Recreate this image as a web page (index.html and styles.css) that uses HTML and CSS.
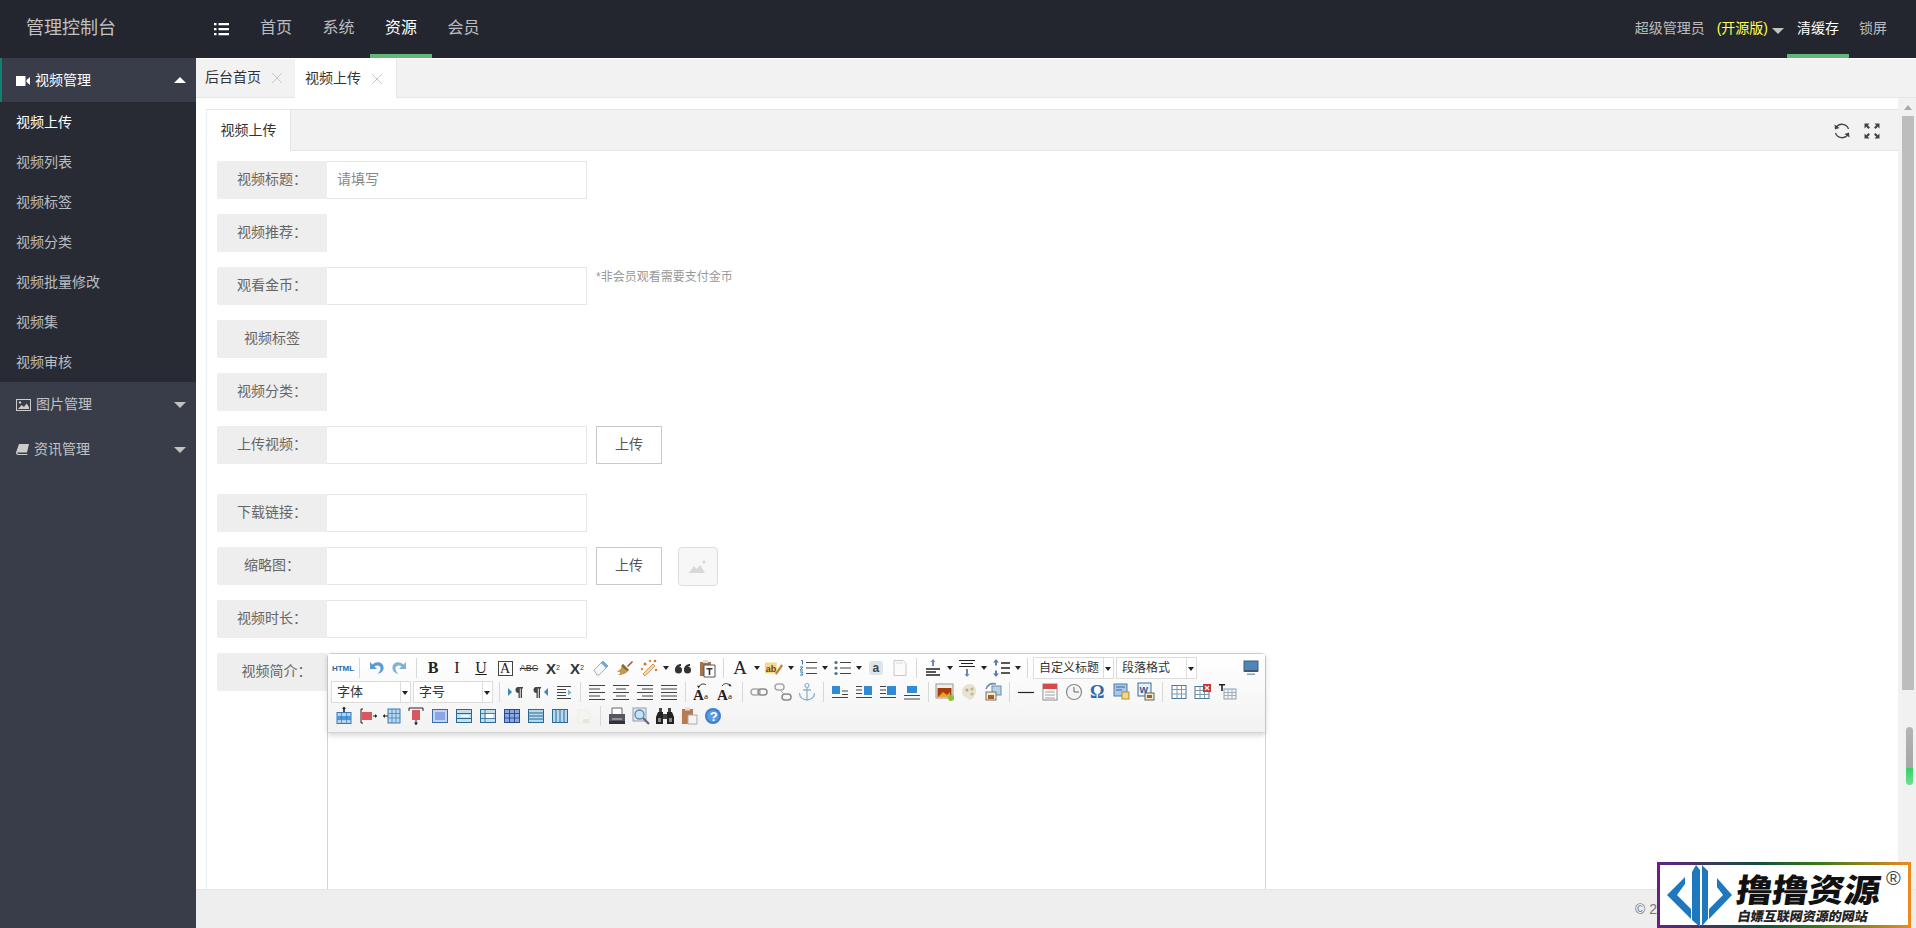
FILE: index.html
```html
<!DOCTYPE html>
<html lang="zh-CN">
<head>
<meta charset="utf-8">
<title>管理控制台</title>
<link rel="stylesheet" href="styles.css">
</head>
<body>
<svg class="defs" aria-hidden="true">
  <symbol id="close" viewBox="0 0 12 12"><path d="M1 1l10 10M11 1L1 11" stroke="#c8c8c8" fill="none"/></symbol>
  <symbol id="undo" viewBox="0 0 20 20"><path d="M4 4v7h7l-2.500-2.500C11 6.500 15 7.500 14.500 11c-.2 1.800-1.300 3.500-3 5 4-.8 6.500-3.500 6-7C17 4.500 11 2.500 6.500 6.500z" fill="#5a9bd0"/></symbol>
  <symbol id="redo" viewBox="0 0 20 20"><path d="M16 4v7H9l2.500-2.500C9 6.500 5 7.500 5.500 11c.2 1.800 1.300 3.500 3 5-4-.8-6.500-3.500-6-7C3 4.500 9 2.500 13.500 6.500z" fill="#7fb3d4"/></symbol>
  <symbol id="eraser" viewBox="0 0 20 20"><path d="M3 12l9-9 5 5-9 9H6z" fill="#f4f6f8" stroke="#9ab0c0"/><path d="M10 5l2-2 5 5-2 2z" fill="#6fa8d8"/></symbol>
  <symbol id="brush" viewBox="0 0 20 20"><path d="M12 8l5-5 1 1-5 5z" fill="#8a5a2a"/><path d="M8 6l6 6c-2 3-6 5-11 5 2-1 2-2 2-3-1 0-2 0-3-1 3 0 4-3 6-7z" fill="#c49a4a"/><path d="M8 6l6 6-2 1-6-5z" fill="#8a6a30"/></symbol>
  <symbol id="wand" viewBox="0 0 20 20"><path d="M4 16L14 6l2 2L6 18z" fill="#f0d8b0" stroke="#c8843c" stroke-width=".8"/><circle cx="6" cy="6" r="1.500" fill="#d8702c"/><circle cx="11" cy="3" r="1.300" fill="#e09040"/><circle cx="16" cy="3" r="1.300" fill="#d8702c"/><circle cx="3" cy="11" r="1.300" fill="#e09040"/><circle cx="17" cy="12" r="1.200" fill="#d8702c"/></symbol>
  <symbol id="quote" viewBox="0 0 20 20"><circle cx="5.500" cy="12" r="3.500" fill="#333"/><path d="M2 12c0-4 3-6 6-6v2c-2 0-3 2-3 4z" fill="#333"/><circle cx="14.500" cy="12" r="3.500" fill="#333"/><path d="M11 12c0-4 3-6 6-6v2c-2 0-3 2-3 4z" fill="#333"/></symbol>
  <symbol id="ptext" viewBox="0 0 20 20"><path d="M3 4h11v14H3z" fill="#a8734a"/><path d="M6 2h5v3H6z" fill="#ddd"/><path d="M7 7h11v12H7z" fill="#fff" stroke="#555"/><path d="M9.500 10h6v1.500h-2.200V17h-1.600v-5.500H9.500z" fill="#333"/></symbol>
  <symbol id="ol" viewBox="0 0 20 20"><path d="M8 4.500h11M8 10h11M8 15.500h11" stroke="#444" stroke-width="1.200"/><path d="M3 2.500h1.500v4M2 9h3l-3 3h3M2 14h3l-1 1.500 1 1.500H2" stroke="#3a78b8" fill="none"/></symbol>
  <symbol id="ul" viewBox="0 0 20 20"><path d="M8 4.500h11M8 10h11M8 15.500h11" stroke="#444" stroke-width="1.200"/><circle cx="4" cy="4.500" r="1.600" fill="#46708e"/><circle cx="4" cy="10" r="1.600" fill="#46708e"/><circle cx="4" cy="15.500" r="1.600" fill="#46708e"/></symbol>
  <symbol id="doc" viewBox="0 0 20 20"><path d="M4 2.500h9l3 3v12H4z" fill="#fbfbfb" stroke="#c4c8cc"/><path d="M6 5h7" stroke="#d4d8dc"/></symbol>
  <symbol id="ptop" viewBox="0 0 20 20"><path d="M10 1l2.500 3H11v4H9V4H7.500z" fill="#6a8ab0"/><path d="M3 11h14M3 14h10M3 17h14" stroke="#222" stroke-width="1.300"/></symbol>
  <symbol id="pbot" viewBox="0 0 20 20"><path d="M2 2.500h16M4 5.500h12M2 8.500h16" stroke="#222" stroke-width="1.200"/><path d="M10 19l2.500-3H11v-5H9v5H7.500z" fill="#6a8ab0"/></symbol>
  <symbol id="lh" viewBox="0 0 20 20"><path d="M5 1l3 3.500H6v3H4v-3H2zM5 19l3-3.500H6v-3H4v3H2z" fill="#5a7fb0"/><path d="M10 5h9M10 10h9M10 15h9" stroke="#222" stroke-width="1.300"/></symbol>
  <symbol id="screen" viewBox="0 0 20 20"><rect x="3" y="3" width="14" height="10" fill="#4f86b8" stroke="#3a5f80"/><path d="M3 12h14v2H3z" fill="#44586c"/><path d="M6 15.500h8V17H6z" fill="#8aa0b4"/></symbol>
  <symbol id="ltr" viewBox="0 0 20 20"><path d="M2 6l4 4-4 4z" fill="#3a88b8"/><path d="M12 5h5v1.500h-1V16h-1.300V6.500h-.9V16h-1.300v-5c-1.700 0-3-1.300-3-3s1-3 2.500-3z" fill="#444"/></symbol>
  <symbol id="rtl" viewBox="0 0 20 20"><path d="M18 6l-4 4 4 4z" fill="#3a88b8"/><path d="M6 5h5v1.500h-1V16H8.700V6.500h-.9V16H6.500v-5c-1.700 0-3-1.300-3-3s1-3 2.500-3z" fill="#444"/></symbol>
  <symbol id="indent" viewBox="0 0 20 20"><path d="M3 4.500h14M3 7.500h9M3 10.500h9M3 13.500h9M3 16.500h14" stroke="#444" stroke-width="1.100"/><path d="M14 7.500l3.500 3-3.500 3z" fill="#7fb3d4"/></symbol>
  <symbol id="al" viewBox="0 0 20 20"><path d="M2 3.500h16M2 7h11M2 10.500h16M2 14h11M2 17.500h16" stroke="#444"/></symbol>
  <symbol id="ac" viewBox="0 0 20 20"><path d="M2 3.500h16M5 7h10M2 10.500h16M5 14h10M2 17.500h16" stroke="#444"/></symbol>
  <symbol id="ar" viewBox="0 0 20 20"><path d="M2 3.500h16M7 7h11M2 10.500h16M7 14h11M2 17.500h16" stroke="#444"/></symbol>
  <symbol id="aj" viewBox="0 0 20 20"><path d="M2 3.500h16M2 7h16M2 10.500h16M2 14h16M2 17.500h16" stroke="#444"/></symbol>
  <symbol id="link" viewBox="0 0 20 20"><rect x="2" y="7" width="9" height="6" rx="3" fill="none" stroke="#a8a8a8" stroke-width="1.500"/><rect x="9" y="7" width="9" height="6" rx="3" fill="none" stroke="#8a8a8a" stroke-width="1.500"/></symbol>
  <symbol id="unlink" viewBox="0 0 20 20"><rect x="2" y="2" width="9" height="6" rx="3" fill="none" stroke="#a8a8a8" stroke-width="1.500"/><rect x="9" y="12" width="9" height="6" rx="3" fill="none" stroke="#8a8a8a" stroke-width="1.500"/><path d="M8 9l3 3" stroke="#a8a8a8"/></symbol>
  <symbol id="anchor" viewBox="0 0 20 20"><circle cx="10" cy="3.500" r="2" fill="none" stroke="#8ab0d4" stroke-width="1.200"/><path d="M10 5.500V18M6 8h8M2.500 11c0 4 3 6.500 7.500 7 4.500-.5 7.500-3 7.500-7" stroke="#8ab0d4" fill="none" stroke-width="1.300"/></symbol>
  <symbol id="il" viewBox="0 0 20 20"><rect x="2" y="4" width="8" height="8" fill="#2f8ad8"/><path d="M2 15.500h16M12 9h6M12 12.500h6" stroke="#444" stroke-width="1.100"/></symbol>
  <symbol id="ir" viewBox="0 0 20 20"><rect x="10" y="4" width="8" height="9" fill="#2f8ad8"/><path d="M2 4.500h6M2 8h6M2 11.500h6M2 15.500h16" stroke="#444" stroke-width="1.100"/></symbol>
  <symbol id="in" viewBox="0 0 20 20"><path d="M2 4.500h6M2 8h6M2 11.500h6M2 15.500h16" stroke="#444" stroke-width="1.100"/><rect x="9" y="4" width="9" height="9" fill="#2f8ad8"/></symbol>
  <symbol id="ic" viewBox="0 0 20 20"><rect x="5" y="4" width="10" height="7" fill="#2f8ad8"/><path d="M2 13.500h16M2 17h16" stroke="#444" stroke-width="1.100"/></symbol>
  <symbol id="image" viewBox="0 0 20 20"><rect x="1" y="2" width="17" height="14" fill="#eee" stroke="#998"/><rect x="2.500" y="6" width="14" height="9" fill="#a83c10"/><path d="M3 15l5-5 4 3 3-3v5z" fill="#e8a030"/><circle cx="16" cy="16" r="3" fill="#8ac034"/></symbol>
  <symbol id="emo" viewBox="0 0 20 20"><path d="M3 10c0-5 4-8 8-8s6 3 6 7-3 9-7 9c-1-3-7-2-7-8z" fill="#e8e2d2"/><circle cx="8" cy="8" r="1.500" fill="#b8a888"/><circle cx="13" cy="7" r="1.500" fill="#c8b078"/><circle cx="13" cy="12" r="1.500" fill="#a8c0a0"/></symbol>
  <symbol id="music" viewBox="0 0 20 20"><rect x="9" y="4" width="9" height="9" fill="#b8d0e8" stroke="#6a8ab0"/><rect x="3" y="10" width="10" height="8" fill="#f0e8d0" stroke="#776"/><rect x="5" y="13" width="6" height="4" fill="#a85c20"/><path d="M3 7C5 2 9 1 13 2" stroke="#6a8ab0" fill="none" stroke-width="1.500"/></symbol>
  <symbol id="hr" viewBox="0 0 20 20"><path d="M2 10.500h16" stroke="#222" stroke-width="1.200"/></symbol>
  <symbol id="date" viewBox="0 0 20 20"><rect x="3" y="2" width="14" height="16" fill="#fff" stroke="#8a8a8a"/><rect x="3" y="2" width="14" height="5" fill="#d84848"/><path d="M5 10h10M5 13h10M5 16h10" stroke="#999"/></symbol>
  <symbol id="time" viewBox="0 0 20 20"><circle cx="10" cy="10" r="7.500" fill="#f4f4f4" stroke="#888" stroke-width="1.200"/><path d="M10 5v5h5" stroke="#666" fill="none"/></symbol>
  <symbol id="tpl" viewBox="0 0 20 20"><rect x="2" y="2" width="13" height="12" fill="#a8c8e8" stroke="#4a7ab0"/><path d="M4 5h9M4 8h6" stroke="#3a6a9a"/><rect x="10" y="10" width="7" height="7" fill="#f0d890" stroke="#b08a30"/></symbol>
  <symbol id="tbl" viewBox="0 0 20 20"><rect x="3" y="3.500" width="14" height="13" fill="#fff" stroke="#4a7898"/><path d="M3 7.500h14M3 12h14M8 3.500v13M12.500 3.500v13" stroke="#7a9ab0"/></symbol>
  <symbol id="tdel" viewBox="0 0 20 20"><rect x="2" y="4.500" width="14" height="12" fill="#fff" stroke="#4a7898"/><path d="M2 8.500h14M2 12.500h14M7 4.500v12M11.500 4.500v12" stroke="#7a9ab0"/><rect x="10" y="2" width="8" height="8" fill="#c83838"/><path d="M12 4l4 4M16 4l-4 4" stroke="#fff" stroke-width="1.200"/></symbol>
  <symbol id="ttitle" viewBox="0 0 20 20"><path d="M2 2h6v1.500H5.800V9H4.200V3.500H2z" fill="#222"/><rect x="7" y="7" width="12" height="10" fill="#f4f4f4" stroke="#8aa0b0"/><path d="M7 10.500h12M7 13.500h12M11 7v10M15 7v10" stroke="#a0b0c0"/></symbol>
  <symbol id="t1" viewBox="0 0 20 20"><path d="M10 .5l2 2.500h-1.200v3H9.200V3H8z" fill="#222"/><rect x="3" y="6.500" width="14" height="11" fill="#b0d4ee" stroke="#3a7ab0"/><rect x="3" y="10" width="14" height="3" fill="#4a98d8"/><path d="M3 13.500h14M7.500 6.500v11M12.500 6.500v11" stroke="#3a7ab0" stroke-width=".7"/></symbol>
  <symbol id="t2" viewBox="0 0 20 20"><path d="M5 3H3v14h2" stroke="#222" fill="none"/><rect x="4" y="6" width="10" height="8" fill="#d85860"/><path d="M15 10h4" stroke="#222"/><path d="M17 8l2 2-2 2z" fill="#222"/></symbol>
  <symbol id="t3" viewBox="0 0 20 20"><rect x="6" y="3" width="12" height="14" fill="#b8d8f0" stroke="#3a7ab0"/><path d="M10 3v14M14 3v14M6 7.500h12M6 12h12" stroke="#3a7ab0" stroke-width=".7"/><path d="M1 10h5" stroke="#222"/><path d="M3 8l-2 2 2 2z" fill="#222"/></symbol>
  <symbol id="t4" viewBox="0 0 20 20"><path d="M3 5V2h14v3" stroke="#222" fill="none"/><rect x="6" y="4" width="8" height="10" fill="#d85860"/><path d="M10 14v5" stroke="#222"/><path d="M8 16.500l2 2.500 2-2.500z" fill="#222"/></symbol>
  <symbol id="t5" viewBox="0 0 20 20"><rect x="2.500" y="3.500" width="15" height="13" fill="#c4d4f0" stroke="#3a6ab0"/><rect x="5" y="6" width="10" height="8" fill="#8aa6e4"/></symbol>
  <symbol id="t6" viewBox="0 0 20 20"><rect x="2.500" y="3.500" width="15" height="13" fill="#c4e0f0" stroke="#2a6a90"/><path d="M2.500 7.500h15M2.500 12.500h15" stroke="#2a6a90"/><path d="M7 10h8" stroke="#fff" stroke-width="1.500"/></symbol>
  <symbol id="t7" viewBox="0 0 20 20"><rect x="2.500" y="3.500" width="15" height="13" fill="#c4e0f0" stroke="#2a6a90"/><path d="M2.500 7.500h15M2.500 12.500h15M7 3.500v13" stroke="#2a6a90" stroke-width=".8"/><rect x="8" y="8" width="7" height="4" fill="#fff"/></symbol>
  <symbol id="t8" viewBox="0 0 20 20"><rect x="2.500" y="3.500" width="15" height="13" fill="#8aa8e0" stroke="#2a4a90"/><path d="M2.500 7.500h15M2.500 12h15M7.500 3.500v13M12.500 3.500v13" stroke="#1a3a80" stroke-width=".8"/></symbol>
  <symbol id="t9" viewBox="0 0 20 20"><rect x="2.500" y="3.500" width="15" height="13" fill="#b8d8f0" stroke="#2a6a90"/><path d="M2.500 7h15M2.500 10h15M2.500 13h15" stroke="#2a6a90"/></symbol>
  <symbol id="t10" viewBox="0 0 20 20"><rect x="2.500" y="3.500" width="15" height="13" fill="#b8d8f0" stroke="#2a6a90"/><path d="M6 3.500v13M10 3.500v13M14 3.500v13" stroke="#2a6a90"/></symbol>
  <symbol id="t11" viewBox="0 0 20 20"><path d="M4 4h8l4 4v9H4z" fill="#f4f4f0" stroke="#ececec"/><path d="M9 13h6v4H9z" fill="#e6e6dc"/></symbol>
  <symbol id="print" viewBox="0 0 20 20"><path d="M5 2h10v7H5z" fill="#fff" stroke="#666"/><rect x="2" y="8" width="16" height="7" fill="#556"/><rect x="2" y="15" width="16" height="3" fill="#333"/><path d="M5 13h10" stroke="#ccc"/></symbol>
  <symbol id="prev" viewBox="0 0 20 20"><rect x="2" y="2" width="13" height="13" fill="#dfe8f0" stroke="#8aa0b0"/><circle cx="8.500" cy="8.500" r="4.500" fill="#c8e0f4" stroke="#5a88a8" stroke-width="1.300"/><path d="M12 12l6 6" stroke="#667" stroke-width="2.300"/></symbol>
  <symbol id="find" viewBox="0 0 20 20"><path d="M3 6h5v12H1V11zM12 6h5l2 5v7h-7z" fill="#222"/><path d="M4 2h3v4H4zM13 2h3v4h-3zM8 8h4v5H8z" fill="#444"/><path d="M3 12h3v4H3zM14 12h3v4h-3z" fill="#888"/></symbol>
  <symbol id="paste" viewBox="0 0 20 20"><path d="M3 3h11v15H3z" fill="#b87c50"/><path d="M6 1.500h5v3H6z" fill="#ddd"/><path d="M9 9h9v9H9z" fill="#f4f4f4" stroke="#aaa"/></symbol>
</svg>

<div class="app">
  <header class="top">
    <div class="brand">管理控制台</div>
    <svg class="burger" viewBox="0 0 15 14"><path d="M0 1h2.500v2.200H0zM0 6h2.500v2.200H0zM0 11h2.500v2.200H0zM4.500 1H15v2.200H4.500zM4.500 6H15v2.200H4.500zM4.500 11H15v2.200H4.500z" fill="#fff"/></svg>
    <nav class="nav">
      <a class="nav-item">首页</a>
      <a class="nav-item">系统</a>
      <a class="nav-item on">资源</a>
      <a class="nav-item">会员</a>
    </nav>
    <div class="top-right">
      <span>超级管理员</span>
      <span class="edition">(开源版)</span>
      <i class="caret down small"></i>
      <a class="tool on">清缓存</a>
      <a class="tool">锁屏</a>
    </div>
  </header>

  <div class="below">
    <aside class="side">
      <div class="group open">
        <svg class="gi" viewBox="0 0 14 10"><path d="M0 0h9.500v10H0z" fill="#fff"/><path d="M10.500 4L14 1v8l-3.500-3z" fill="#fff"/></svg>
        <span>视频管理</span><i class="caret up"></i>
      </div>
      <div class="sub">
        <a class="on">视频上传</a>
        <a>视频列表</a>
        <a>视频标签</a>
        <a>视频分类</a>
        <a>视频批量修改</a>
        <a>视频集</a>
        <a>视频审核</a>
      </div>
      <div class="group">
        <svg class="gi wide" viewBox="0 0 15 12"><rect x=".5" y=".5" width="14" height="11" fill="none" stroke="#ccc"/><path d="M2 10l3.500-4 2.500 2 2.500-3.500L13 8v2z" fill="#ccc"/><circle cx="4" cy="3.500" r="1.200" fill="#ccc"/></svg>
        <span>图片管理</span><i class="caret down"></i>
      </div>
      <div class="group">
        <svg class="gi book" viewBox="0 0 13 11"><path d="M3 0h10l-2 8.500H1.500C1 9.500 2 10 3 10h8.500l-.3 1H2.500C.5 11-.4 9.800 .2 8z" fill="#ccc"/></svg>
        <span>资讯管理</span><i class="caret down"></i>
      </div>
    </aside>

    <main class="main">
      <div class="tabs">
        <div class="tab">后台首页<svg class="x"><use href="#close"/></svg></div>
        <div class="tab active">视频上传<svg class="x"><use href="#close"/></svg></div>
      </div>

      <div class="body">
        <div class="pane">
          <section class="card">
            <div class="card-head">
              <div class="card-tab">视频上传</div>
              <div class="card-tools">
                <svg class="ct" viewBox="0 0 18 18"><path d="M15.500 7A7 7 0 0 0 3 5.500M2.500 11A7 7 0 0 0 15 12.500" fill="none" stroke="#444" stroke-width="1.300"/><path d="M1.500 2.500l.5 5 4.500-1.500zM16.500 15.500l-.5-5-4.500 1.500z" fill="#444"/></svg>
                <svg class="ct" viewBox="0 0 18 18"><path d="M1.500 1.500h5L4.800 3.200 7 5.400 5.400 7 3.200 4.800 1.500 6.500zM16.500 1.500v5l-1.700-1.700L12.600 7 11 5.400l2.200-2.200-1.700-1.700zM1.500 16.500v-5l1.700 1.700L5.400 11 7 12.600l-2.200 2.200 1.700 1.700zM16.500 16.500h-5l1.700-1.700L11 12.600 12.600 11l2.200 2.200 1.700-1.700z" fill="#444"/></svg>
              </div>
            </div>
            <div class="form">
              <div class="row"><label class="lbl">视频标题：</label><input class="inp" placeholder="请填写"></div>
              <div class="row"><label class="lbl">视频推荐：</label></div>
              <div class="row"><label class="lbl">观看金币：</label><input class="inp"><span class="hint">*非会员观看需要支付金币</span></div>
              <div class="row"><label class="lbl">视频标签</label></div>
              <div class="row"><label class="lbl">视频分类：</label></div>
              <div class="row gap"><label class="lbl">上传视频：</label><input class="inp"><button class="btn">上传</button></div>
              <div class="row"><label class="lbl">下载链接：</label><input class="inp"></div>
              <div class="row"><label class="lbl">缩略图：</label><input class="inp"><button class="btn">上传</button>
                <div class="thumb"><svg viewBox="0 0 20 16"><path d="M1 14l5-7 3 3 3-4 5 8z" fill="#d8d8d8"/><circle cx="16" cy="3" r="1.500" fill="#d8d8d8"/></svg></div>
              </div>
              <div class="row"><label class="lbl">视频时长：</label><input class="inp"></div>
              <div class="row last"><label class="lbl shift">视频简介：</label>
                <div class="editor">
                  <div class="toolbar">
                    <div class="tr">
                      <b class="b html">HTML</b><s class="sep"></s>
                      <svg class="b"><use href="#undo"/></svg><svg class="b"><use href="#redo"/></svg><s class="sep"></s>
                      <b class="b serif big">B</b><em class="b serif big">I</em><span class="b serif big"><u>U</u></span><span class="b serif"><span class="boxed">A</span></span>
                      <span class="b abc">ABC</span><span class="b xs">X<sup>2</sup></span><span class="b xs">X<sub>2</sub></span>
                      <svg class="b"><use href="#eraser"/></svg><svg class="b"><use href="#brush"/></svg><svg class="b"><use href="#wand"/></svg><i class="dd"></i>
                      <svg class="b"><use href="#quote"/></svg><svg class="b"><use href="#ptext"/></svg><s class="sep"></s>
                      <span class="b serif huge">A</span><i class="dd"></i>
                      <svg class="b" viewBox="0 0 22 20"><rect x="1" y="4" width="13" height="12" fill="#f4d98a"/><path d="M12 16l7-10 2 1.500-7 10z" fill="#b8863a"/><text x="2" y="14" class="svgab">ab</text></svg><i class="dd"></i>
                      <svg class="b"><use href="#ol"/></svg><i class="dd"></i><svg class="b"><use href="#ul"/></svg><i class="dd"></i>
                      <svg class="b" viewBox="0 0 20 20"><rect x="3" y="3" width="14" height="14" rx="3" fill="#dde4ea"/><text x="6.500" y="14" class="svga">a</text></svg><svg class="b"><use href="#doc"/></svg><s class="sep"></s>
                      <svg class="b"><use href="#ptop"/></svg><i class="dd"></i><svg class="b"><use href="#pbot"/></svg><i class="dd"></i><svg class="b"><use href="#lh"/></svg><i class="dd"></i><s class="sep"></s>
                      <div class="sel s1"><span>自定义标题</span><i class="dd"></i></div>
                      <div class="sel s2"><span>段落格式</span><i class="dd"></i></div>
                      <svg class="b end"><use href="#screen"/></svg>
                    </div>
                    <div class="tr">
                      <div class="sel s3"><span>字体</span><i class="dd"></i></div>
                      <div class="sel s3"><span>字号</span><i class="dd"></i></div><s class="sep"></s>
                      <svg class="b"><use href="#ltr"/></svg><svg class="b"><use href="#rtl"/></svg><svg class="b"><use href="#indent"/></svg><s class="sep"></s>
                      <svg class="b"><use href="#al"/></svg><svg class="b"><use href="#ac"/></svg><svg class="b"><use href="#ar"/></svg><svg class="b"><use href="#aj"/></svg><s class="sep"></s>
                      <svg class="b" viewBox="0 0 20 20"><path d="M7 5C8 2 12 1 14 3" stroke="#333" fill="none"/><path d="M5 3.500l3 .5-1.500 2.500z" fill="#333"/><text x="1" y="18" class="svgA">A</text><text x="12" y="17" class="svgb">a</text></svg>
                      <svg class="b" viewBox="0 0 20 20"><path d="M6 4c2-3 5-3 8-1" stroke="#333" fill="none"/><path d="M15.500 4.500l-3-.5 1.500-2.500z" fill="#333"/><text x="1" y="18" class="svgA">A</text><text x="12" y="17" class="svgb">a</text></svg><s class="sep"></s>
                      <svg class="b"><use href="#link"/></svg><svg class="b"><use href="#unlink"/></svg><svg class="b"><use href="#anchor"/></svg><s class="sep"></s>
                      <svg class="b"><use href="#il"/></svg><svg class="b"><use href="#ir"/></svg><svg class="b"><use href="#in"/></svg><svg class="b"><use href="#ic"/></svg><s class="sep"></s>
                      <svg class="b"><use href="#image"/></svg><svg class="b"><use href="#emo"/></svg><svg class="b"><use href="#music"/></svg><s class="sep"></s>
                      <svg class="b"><use href="#hr"/></svg><svg class="b"><use href="#date"/></svg><svg class="b"><use href="#time"/></svg>
                      <svg class="b" viewBox="0 0 20 20"><text x="2" y="16" class="svgo">Ω</text></svg>
                      <svg class="b"><use href="#tpl"/></svg>
                      <svg class="b" viewBox="0 0 20 20"><rect x="2" y="1" width="13" height="13" fill="#e8f0f8" stroke="#3a6aa0"/><text x="3.500" y="11" class="svgw">W</text><rect x="9" y="11" width="9" height="7" fill="#f0e8d0" stroke="#665"/><rect x="11" y="13" width="5" height="3" fill="#a85c20"/></svg><s class="sep"></s>
                      <svg class="b"><use href="#tbl"/></svg><svg class="b"><use href="#tdel"/></svg><svg class="b"><use href="#ttitle"/></svg>
                    </div>
                    <div class="tr r3">
                      <svg class="b"><use href="#t1"/></svg><svg class="b"><use href="#t2"/></svg><svg class="b"><use href="#t3"/></svg><svg class="b"><use href="#t4"/></svg><svg class="b"><use href="#t5"/></svg><svg class="b"><use href="#t6"/></svg><svg class="b"><use href="#t7"/></svg><svg class="b"><use href="#t8"/></svg><svg class="b"><use href="#t9"/></svg><svg class="b"><use href="#t10"/></svg><svg class="b"><use href="#t11"/></svg><s class="sep"></s>
                      <svg class="b"><use href="#print"/></svg><svg class="b"><use href="#prev"/></svg><svg class="b"><use href="#find"/></svg><svg class="b"><use href="#paste"/></svg>
                      <svg class="b" viewBox="0 0 20 20"><circle cx="10" cy="10" r="8" fill="#3a7fd0"/><circle cx="10" cy="10" r="6" fill="#5a9ae0"/><text x="6.800" y="14.500" class="svgq">?</text></svg>
                    </div>
                  </div>
                  <div class="edit-area"></div>
                </div>
              </div>
            </div>
          </section>
        </div>
        <div class="scroll">
          <i class="arrow"></i>
          <div class="thumbbar"></div>
          <div class="pill"></div>
        </div>
      </div>

      <footer class="foot"><span>© 2</span></footer>
    </main>
  </div>

  <div class="mark">
    <svg class="mark-logo" viewBox="0 0 75 66"><path d="M7 33L25 15v7l-8 11 14 14v10zM32 10l4-7 4 5v57l-8-7zM42 3l6 6v48l-6 7zM57 16l15 17-23 24V47l14-14-6-8z" fill="#1f78bd"/></svg>
    <div class="mark-text">
      <div class="mark-title">撸撸资源</div>
      <div class="mark-sub">白嫖互联网资源的网站</div>
    </div>
    <span class="mark-r">®</span>
  </div>
</div>
</body>
</html>
```

FILE: styles.css
```css
* { box-sizing: border-box; }
html, body { margin: 0; height: 100%; overflow: hidden; }
body {
  font: 14px/1.4 "Liberation Sans", "Noto Sans CJK SC", sans-serif;
  color: #333;
  background: #fff;
}
a { color: inherit; text-decoration: none; }
.defs { position: absolute; width: 0; height: 0; }
.svgab { font: bold 10px "Liberation Sans", sans-serif; fill: #7a3a10; }
.svga { font: bold 12px "Liberation Sans", sans-serif; fill: #444; }
.svgA { font: bold 15px "Liberation Serif", serif; fill: #222; }
.svgb { font: 9px "Liberation Serif", serif; fill: #222; }
.svgo { font: bold 18px "Liberation Serif", serif; fill: #2a6ab0; }
.svgw { font: bold 9px "Liberation Sans", sans-serif; fill: #2a5a90; }
.svgq { font: bold 13px "Liberation Sans", sans-serif; fill: #fff; }

.app { height: 928px; display: flex; flex-direction: column; position: relative; }

/* header */
.top {
  height: 58px;
  flex: none;
  background: #23262e;
  display: flex;
  align-items: center;
  padding-left: 26px;
  color: rgba(255,255,255,.7);
}
.brand { width: 188px; font-size: 18px; color: rgba(255,255,255,.72); }
.burger { width: 15px; height: 14px; margin-right: 16px; }
.nav { display: flex; gap: .5px; height: 100%; }
.nav-item {
  padding: 0 15px;
  font-size: 16px;
  line-height: 56px;
  height: 58px;
  border-bottom: 4px solid transparent;
}
.nav-item.on { color: #fff; border-bottom-color: #5fb878; }
.top-right { margin-left: auto; display: flex; align-items: center; height: 100%; padding-right: 19px; font-size: 14px; }
.edition { color: #ff5; margin-left: 12px; }
.tool {
  padding: 0 10px;
  height: 58px;
  line-height: 56px;
  border-bottom: 4px solid transparent;
}
.tool.on { color: #fff; border-bottom-color: #5fb878; margin-left: 3px; width: 62px; text-align: center; }

.caret { width: 0; height: 0; border-left: 6px solid transparent; border-right: 6px solid transparent; display: inline-block; }
.caret.down { border-top: 6px solid #c2c2c2; }
.caret.up { border-bottom: 6px solid #fff; }
.caret.small { margin-left: 4px; margin-top: 3px; }

/* layout */
.below { flex: 1; display: flex; min-height: 0; }

/* sidebar */
.side { width: 196px; flex: none; background: #393d49; color: rgba(255,255,255,.7); }
.group {
  height: 45px;
  display: flex;
  align-items: center;
  padding-left: 16px;
  position: relative;
}
.group.open { height: 44px; color: #fff; border-left: 2px solid #0f7f78; padding: 2px 0 0 14px; }
.group .caret { position: absolute; left: 174px; top: 20px; }
.group.open .caret { left: 172px; top: 19px; }
.gi { width: 14px; height: 10px; margin-right: 5px; }
.gi.wide { width: 15px; height: 12px; }
.gi.book { width: 13px; height: 11px; margin-right: 5px; }
.sub { background: #282b33; }
.sub a { display: block; height: 40px; line-height: 40px; padding-left: 16px; }
.sub a.on { color: #fff; }

/* main */
.main { flex: 1; min-width: 0; display: flex; flex-direction: column; }
.tabs {
  height: 40px;
  flex: none;
  background: #f2f2f2;
  border-top: 1px solid #fff;
  display: flex;
  border-bottom: 1px solid #e6e6e6;
  padding-left: 9px;
  color: #333;
}
.tab { display: flex; align-items: center; width: 90px; font-size: 14px; gap: 10px; }
.tab.active {
  background: #fff;
  width: 102px;
  padding-left: 10px;
  margin-bottom: -1px;
  border-right: 1px solid #e6e6e6;
}
.x { width: 12px; height: 12px; flex: none; }

.body { flex: 1; min-height: 0; display: flex; overflow: hidden; background: #fff; }
.pane { flex: 1; min-width: 0; padding: 11px 0 0 10px; }
.card { border-left: 1px solid #e6eef0; height: 1000px; }
.card-head {
  height: 42px;
  background: #f2f2f2;
  border-top: 1px solid #e6e6e6;
  border-bottom: 1px solid #e6e6e6;
  display: flex;
  justify-content: space-between;
}
.card-tab {
  width: 84px;
  background: #fff;
  height: 41px;
  line-height: 41px;
  text-align: center;
  border-right: 1px solid #e6e6e6;
  color: #333;
}
.card-tools { display: flex; align-items: center; gap: 12px; padding: 2px 17px 0 0; }
.ct { width: 18px; height: 18px; }

.form { padding: 10px 0 0 10px; }
.row { display: flex; height: 38px; margin-bottom: 15px; }
.row.gap { margin-bottom: 30px; }
.row.last { height: auto; margin: 0; }
.lbl {
  width: 110px;
  height: 38px;
  flex: none;
  background: #eee;
  line-height: 36px;
  text-align: center;
  color: #666;
  border-radius: 2px 0 0 2px;
}
.lbl.shift { padding-left: 9px; }
.inp {
  width: 260px;
  height: 38px;
  border: 1px solid #e6e6e6;
  border-left: 0;
  padding: 0 10px 2px;
  font: inherit;
  color: #333;
  outline: 0;
  background: #fff;
}
.inp::placeholder { color: #888; }
.hint { margin-left: 9px; font-size: 12px; line-height: 20px; color: #999; }
.btn {
  width: 66px;
  height: 38px;
  margin-left: 9px;
  background: #fff;
  border: 1px solid #c9c9c9;
  font: inherit;
  color: #555;
  padding: 0;
}
.thumb {
  width: 40px;
  height: 39px;
  margin-left: 16px;
  background: #f7f7f7;
  border: 1px solid #ddd;
  border-radius: 4px;
  display: flex;
  align-items: center;
  justify-content: center;
}
.thumb svg { width: 20px; height: 16px; }

/* editor */
.editor { width: 939px; border: 1px solid #d4d4d4; border-radius: 4px 4px 0 0; height: 400px; background: #fff; }
.toolbar {
  height: 79px;
  padding-top: 2px;
  background: linear-gradient(#fff, #f2f2f2);
  border-bottom: 1px solid #d4d4d4;
  box-shadow: 0 2px 6px rgba(0,0,0,.18);
  position: relative;
}
.tr { display: flex; align-items: center; height: 24px; padding-left: 3px; padding-right: 2px; color: #333; }
.tr.r3 { padding-left: 4px; }
.b {
  width: 24px;
  height: 20px;
  flex: none;
  display: flex;
  align-items: center;
  justify-content: center;
  font-style: normal;
  font-weight: 400;
}
svg.b { padding: 0 2px; }
.b.end { margin-left: auto; }
.html { font: bold 8px "Liberation Sans", sans-serif; color: #2a6a98; }
.serif { font-family: "Liberation Serif", serif; color: #222; }
.big { font-size: 16px; }
b.big { font-weight: 700; }
.huge { font-size: 19px; }
.boxed { border: 1px solid #444; width: 15px; height: 15px; line-height: 14px; font-size: 14px; text-align: center; display: block; }
.abc { font: 9px "Liberation Sans", sans-serif; text-decoration: line-through; color: #333; }
.xs { font: bold 15px "Liberation Sans", sans-serif; color: #333; }
.xs sup, .xs sub { font-size: 7px; font-weight: 400; line-height: 0; }
.dd { flex: none; width: 10px; height: 4px; position: relative; display: block; }
.dd::after {
  content: "";
  position: absolute;
  left: 2px;
  top: 0;
  border-left: 3px solid transparent;
  border-right: 3px solid transparent;
  border-top: 4px solid #222;
}
.sep { flex: none; width: 9px; height: 20px; position: relative; text-decoration: none; }
.sep::after { content: ""; position: absolute; left: 4px; top: 0; bottom: 0; width: 1px; background: #d8d8d8; }
.sel {
  flex: none;
  height: 22px;
  border: 1px solid #dcdcdc;
  background: #fff;
  display: flex;
  align-items: center;
  justify-content: space-between;
  font-size: 12px;
  line-height: 20px;
  padding-left: 5px;
  color: #333;
}
.sel .dd { width: 10px; height: 20px; border-left: 1px solid #dcdcdc; }
.sel .dd::after { top: 9px; left: 1px; }
.s1 { width: 81px; margin-left: 1px; }
.s2 { width: 81px; margin-left: 2px; }
.s3 { width: 80px; margin-right: 2px; font-size: 13px; }
.edit-area { height: 320px; background: #fff; }

/* scrollbar */
.scroll { width: 18px; flex: none; background: #f1f1f1; position: relative; padding: 0 2px 0 4px; }
.arrow {
  display: block;
  width: 0;
  height: 0;
  margin: 7px 0 0 2px;
  border-left: 4px solid transparent;
  border-right: 4px solid transparent;
  border-bottom: 5px solid #aaa;
}
.thumbbar { width: 12px; height: 574px; margin-top: 6px; background: #bdbdbd; }
.pill {
  position: absolute;
  left: 8px;
  top: 629px;
  width: 7px;
  height: 58px;
  border-radius: 4px;
  background: linear-gradient(#b5b5b5 0, #a6a6a6 70%, #36d068 71%, #6fe08e 100%);
}

/* footer */
.foot {
  height: 39px;
  flex: none;
  background: #eee;
  border-top: 1px solid #e6e6e6;
  line-height: 38px;
  padding-left: 1439px;
  color: #777;
}

/* watermark */
.mark {
  position: absolute;
  left: 1657px;
  top: 862px;
  width: 254px;
  height: 66px;
  background: #fff;
  border: 3px solid;
  border-image: linear-gradient(90deg, #6a1f86, #10503c 40%, #3a7a1a 65%, #ee8a1c) 1;
  display: flex;
}
.mark-logo { width: 75px; height: 66px; margin: -3px 0 0 0; flex: none; }
.mark-text { margin: 7px 0 0 2px; width: 150px; text-align: left; }
.mark-title {
  font: 900 36px/32px "Noto Sans CJK SC", sans-serif;
  color: #111;
  transform: skewX(-8deg) scaleY(.9);
  white-space: nowrap;
}
.mark-sub {
  font: 900 13px/18px "Noto Sans CJK SC", sans-serif;
  color: #222;
  margin: 3px 0 0 1px;
  transform: skewX(-10deg);
  white-space: nowrap;
}
.mark-r { position: absolute; left: 226px; top: 3px; font-size: 20px; line-height: 20px; color: #444; }
```
